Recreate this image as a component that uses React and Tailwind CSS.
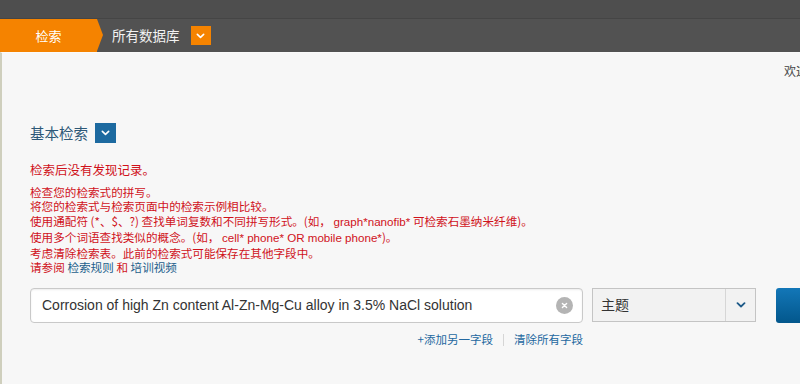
import { useState } from 'react'

const cjk = { fontFamily: '"Noto Sans CJK SC", "Liberation Sans", sans-serif' }
const latin = { fontFamily: '"Liberation Sans", Arial, "Noto Sans CJK SC", sans-serif' }

function Chevron({ className = '', color = 'white' }) {
  return (
    <svg viewBox="0 0 10 6" className={className} fill="none">
      <path d="M1.5 1.2 L5 4.5 L8.5 1.2" stroke={color} strokeWidth="1.8" strokeLinecap="round" strokeLinejoin="round" />
    </svg>
  )
}

function TopBar() {
  return (
    <div className="bg-[#4e4e4e]">
      <div className="h-[19px] border-b border-[#454545]" />
      <div className="h-[33px] bg-[#525252] flex items-center">
        <div className="relative h-full w-[97px] bg-[#f58300] flex items-center justify-center text-white text-[13px]" style={cjk}>
          检索
          <div className="absolute right-[-6px] top-0 h-full w-[6px] overflow-hidden">
            <div className="w-0 h-0 border-t-[16.5px] border-b-[16.5px] border-l-[6px] border-t-transparent border-b-transparent border-l-[#f58300]" />
          </div>
        </div>
        <span className="ml-[15px] text-[13.5px] text-[#f2f2f2]" style={cjk}>所有数据库</span>
        <button className="ml-[11px] w-[20px] h-[19px] bg-[#f58300] flex items-center justify-center">
          <Chevron className="w-[9px] h-[6px]" />
        </button>
      </div>
    </div>
  )
}

function Hints() {
  const lines = [
    '检查您的检索式的拼写。',
    '将您的检索式与检索页面中的检索示例相比较。',
    <>使用通配符 (*、$、?) 查找单词复数和不同拼写形式。(如，&nbsp;<span style={latin}>graph*nanofib*</span> 可检索石墨纳米纤维)。</>,
    <>使用多个词语查找类似的概念。(如，&nbsp;<span style={latin}>cell* phone* OR mobile phone*</span>)。</>,
    '考虑清除检索表。此前的检索式可能保存在其他字段中。',
  ]
  return (
    <div className="text-[#d0121b]" style={cjk}>
      <div className="text-[12.5px] leading-[20px] mt-[16px]">检索后没有发现记录。</div>
      <div className="text-[11.6px] leading-[14.7px] mt-[5px]">
        {lines.map((l, i) => <div key={i}>{l}</div>)}
        <div>
          请参阅 <a className="text-[#1e5f8c]">检索规则</a> 和 <a className="text-[#1e5f8c]">培训视频</a>
        </div>
      </div>
    </div>
  )
}

function SearchRow() {
  const [q, setQ] = useState('Corrosion of high Zn content Al-Zn-Mg-Cu alloy in 3.5% NaCl solution')
  return (
    <div className="flex items-start mt-[13px]">
      <div className="flex flex-col items-end shrink-0">
        <div className="w-[553px] h-[35px] bg-white border border-[#c9c9c9] rounded-[4px] shadow-[inset_0_1px_2px_rgba(0,0,0,0.08)] flex items-center pl-[11px] pr-[9px]">
          <input value={q} onChange={e => setQ(e.target.value)} className="flex-1 bg-transparent outline-none text-[14px] text-[#333]" style={latin} />
          <span className="w-[17px] h-[17px] rounded-full bg-[#b4b4b4] flex items-center justify-center">
            <svg viewBox="0 0 10 10" className="w-[7px] h-[7px]"><path d="M2 2 L8 8 M8 2 L2 8" stroke="white" strokeWidth="2" strokeLinecap="round" /></svg>
          </span>
        </div>
        <div className="flex items-center mt-[8px] text-[11.5px] text-[#2468a0]" style={cjk}>
          <a>+添加另一字段</a>
          <span className="mx-[10px] w-px h-[12px] bg-[#d5d5d5]" />
          <a>清除所有字段</a>
        </div>
      </div>
      <div className="ml-[9px] shrink-0 w-[164px] h-[34px] border border-[#c4c4c4] bg-[#f2f2f2] flex">
        <div className="flex-1 flex items-center pl-[8px] text-[14px] text-[#333]" style={cjk}>主题</div>
        <div className="w-[30px] border-l border-[#d6d6d6] flex items-center justify-center">
          <Chevron className="w-[10px] h-[6px]" color="#1d5a88" />
        </div>
      </div>
      <div className="ml-[20px] shrink-0 w-[60px] h-[35px] rounded-l-[3px] bg-gradient-to-b from-[#1377b8] to-[#03578c]" />
    </div>
  )
}

export default function App() {
  return (
    <div className="w-[800px] h-[384px] overflow-hidden bg-[#f7f7f7]">
      <TopBar />
      <div className="h-[332px] border-l-2 border-[#cfcfbd] border-t border-t-[#fafafa] relative overflow-hidden">
        <div className="flex justify-end pt-[9px]">
          <span className="text-[12px] text-[#444] mr-[-8px] whitespace-nowrap" style={cjk}>欢迎</span>
        </div>
        <div className="pl-[28px] pt-[42px]">
          <div className="flex items-center">
            <span className="text-[14.5px] text-[#2d5877]" style={cjk}>基本检索</span>
            <button className="ml-[7px] w-[21px] h-[20px] bg-[#1d6aa0] flex items-center justify-center">
              <Chevron className="w-[9px] h-[6px]" />
            </button>
          </div>
          <Hints />
          <SearchRow />
        </div>
      </div>
    </div>
  )
}
